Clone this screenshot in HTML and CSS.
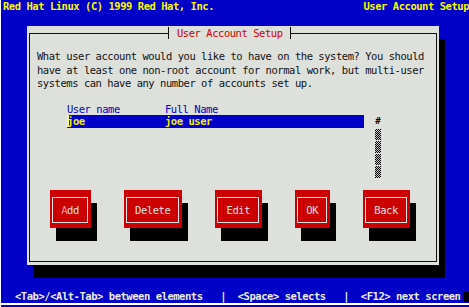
FILE: index.html
```html
<!DOCTYPE html>
<html lang="en">
<head>
  <meta charset="UTF-8" />
  <meta name="viewport" content="width=device-width, initial-scale=1.0"/>
  <title>User Account Setup</title>
  <link rel="stylesheet" href="styles.css">
</head>
<body>

<div class="screen">
  <header class="topbar">
    <span>Red Hat Linux (C) 1999 Red Hat, Inc.</span>
    <span>User Account Setup</span>
  </header>

  <div class="dialog">
    <fieldset class="frame">
      <legend>User Account Setup</legend>

      <p class="intro">What user account would you like to have on the system? You should<br>have at least one non-root account for normal work, but multi-user<br>systems can have any number of accounts set up.</p>

      <div class="listbox">
        <div class="row head">
          <span class="col-user">User name</span>
          <span>Full Name</span>
        </div>
        <div class="list-body">
          <div class="rows">
            <div class="row selected">
              <span class="col-user"><span class="cursor">j</span>oe</span>
              <span>joe user</span>
            </div>
          </div>
          <div class="scrollbar">
            <div class="thumb">#</div>
            <div class="track"></div>
            <div class="track"></div>
            <div class="track"></div>
            <div class="track"></div>
          </div>
        </div>
      </div>

      <div class="buttons">
        <button type="button" class="btn"><span><em>A</em>dd</span></button>
        <button type="button" class="btn"><span>Delete</span></button>
        <button type="button" class="btn"><span>Edit</span></button>
        <button type="button" class="btn"><span>OK</span></button>
        <button type="button" class="btn"><span>Back</span></button>
      </div>
    </fieldset>
  </div>

  <footer class="helpline">
    <span class="help-text">&lt;Tab&gt;/&lt;Alt-Tab&gt; between elements   |  &lt;Space&gt; selects   |  &lt;F12&gt; next screen</span>
    <i class="term-cursor"></i>
  </footer>
</div>

</body>
</html>
```

FILE: styles.css
```css
body {
  margin: 0;
  padding: 0;
  background-color: #0000c8;
  font-family: "DejaVu Sans Mono", monospace;
  font-size: 10.5px;
  line-height: 13px;
  letter-spacing: -0.46px;
}
.screen {
  width: 468px;
  height: 307px;
  border-left: 1px solid #fff;
  display: flex;
  flex-direction: column;
  overflow: hidden;
}
.topbar {
  display: flex;
  justify-content: space-between;
  height: 13px;
  padding-left: 2px;
  color: #f8f800;
  font-weight: bold;
  white-space: nowrap;
  overflow: hidden;
}
.dialog {
  width: 412px;
  height: 239px;
  margin: 13px 0 0 26px;
  padding: 1px 2px 3px 2px;
  box-sizing: border-box;
  background-color: #dee0dc;
  box-shadow: 6px 13px 0 #000;
}
.frame {
  height: 100%;
  box-sizing: border-box;
  margin: 0;
  padding: 0;
  min-width: 0;
  border: 1px solid #111;
}
.frame legend {
  margin-left: 138px;
  padding: 0 7px 0 8px;
  height: 12px;
  line-height: 12px;
  border-left: 1px solid #111;
  border-right: 1px solid #111;
  color: #cc0000;
}
.intro {
  margin: 11px 0 0 0;
  padding-left: 7px;
  line-height: 13.5px;
  color: #111;
  white-space: nowrap;
}
.listbox {
  margin: 12px 0 0 37px;
}
.row {
  display: flex;
  height: 12.5px;
  line-height: 12.5px;
  white-space: nowrap;
}
.col-user {
  width: 98px;
}
.head {
  color: #0000c8;
}
.list-body {
  display: flex;
}
.rows {
  width: 297px;
  height: 62.5px;
}
.selected {
  background-color: #0000c8;
  color: #f0f000;
  font-weight: bold;
}
.cursor {
  box-shadow: inset 2px 0 0 #f8f890;
}
.scrollbar {
  width: 6px;
  margin-left: 11px;
}
.thumb {
  height: 12.5px;
  line-height: 12.5px;
  text-align: center;
  font-weight: bold;
  font-size: 9px;
  letter-spacing: 0;
  color: #000;
}
.track {
  height: 12.5px;
  box-sizing: border-box;
  border-top: 1px solid transparent;
  background-clip: padding-box;
  background-image: repeating-conic-gradient(#000 0 25%, #c8c8c8 0 50%);
  background-size: 2px 2px;
}
.buttons {
  display: flex;
  justify-content: space-between;
  align-items: flex-start;
  margin-top: 12.5px;
  padding: 0 26px 0 20px;
}
.btn {
  font: inherit;
  letter-spacing: inherit;
  border: none;
  margin: 0;
  padding: 7px 3px 5px 2px;
  background-color: #cc0000;
  color: #e4e4e4;
  box-shadow: 6px 13px 0 #000;
  cursor: pointer;
}
.btn span {
  display: block;
  height: 26px;
  box-sizing: border-box;
  padding: 0 8.2px;
  line-height: 24px;
  border: 1px solid #e4e4e4;
}
.btn em {
  font-style: normal;
  color: #ff9c9c;
}
.helpline {
  position: relative;
  margin-top: auto;
  margin-bottom: 2px;
  height: 13px;
  padding-left: 14px;
  border-bottom: 2px solid #fff;
  color: #ececec;
  font-weight: bold;
}
.help-text {
  white-space: pre;
}
.term-cursor {
  position: absolute;
  right: 0;
  top: 2px;
  width: 6px;
  height: 10px;
  background-color: #000;
}
```
